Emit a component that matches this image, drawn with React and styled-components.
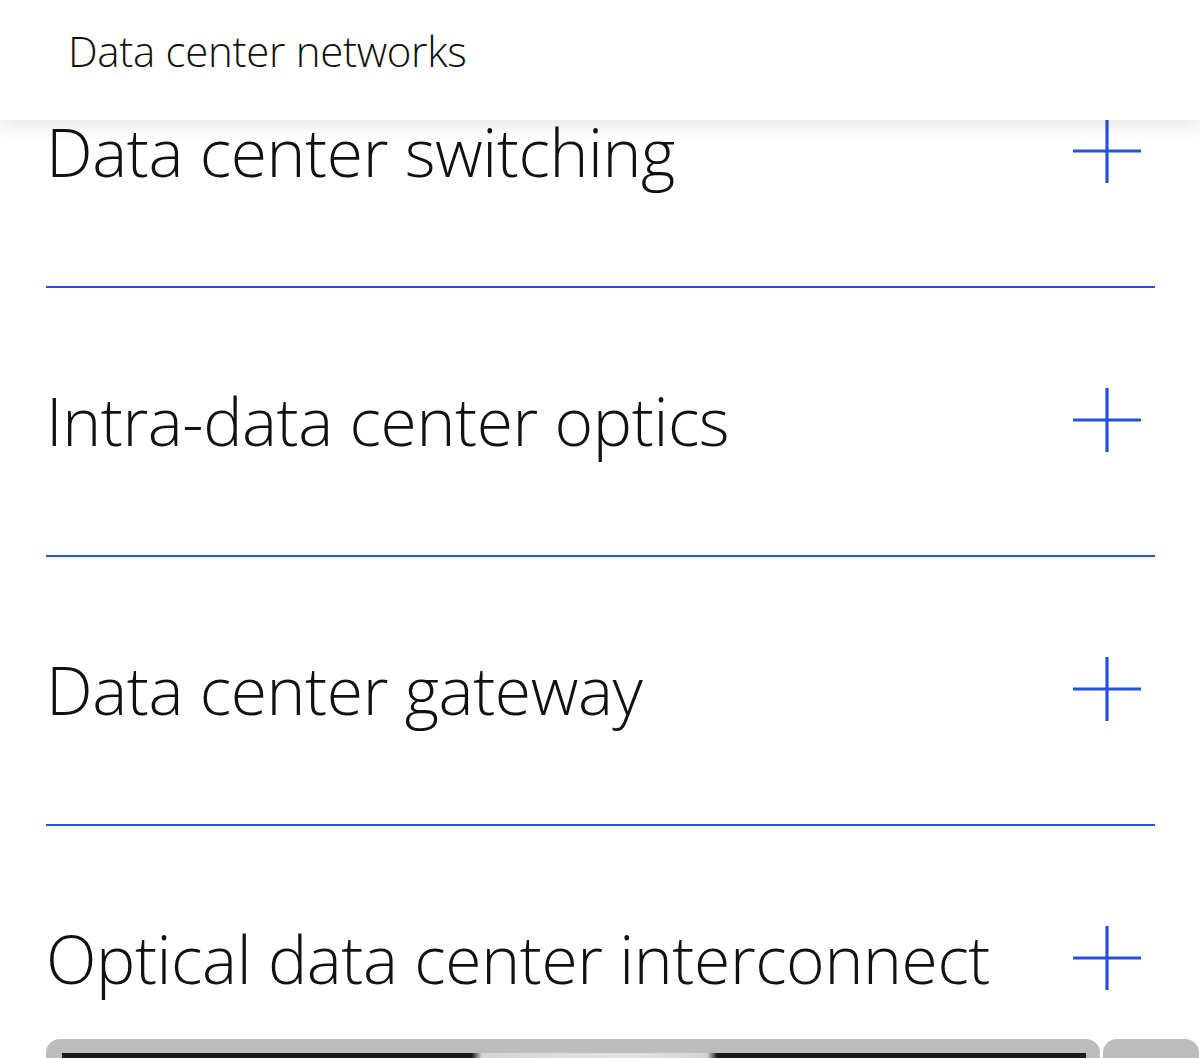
import React from 'react';
import styled, { createGlobalStyle } from 'styled-components';

const GlobalStyle = createGlobalStyle`
  html, body {
    margin: 0;
    padding: 0;
    background: #ffffff;
    overflow: hidden;
  }
  body {
    font-family: "Open Sans", "Noto Sans", sans-serif;
    color: #111111;
  }
`;

const items = [
  'Data center switching',
  'Intra-data center optics',
  'Data center gateway',
  'Optical data center interconnect',
];

function PlusIcon() {
  return (
    <svg width="68" height="64" viewBox="0 0 68 64" aria-hidden="true">
      <path d="M0 32 H68 M34 0 V64" stroke="#2452e0" strokeWidth="3.2" fill="none" />
    </svg>
  );
}

function App() {
  return (
    <Page>
      <GlobalStyle />
      <Header>
        <HeaderTitle>Data center networks</HeaderTitle>
      </Header>
      <List>
        {items.map((label, i) => (
          <Row key={label} $first={i === 0} $last={i === items.length - 1}>
            <RowLabel>{label}</RowLabel>
            <PlusIcon />
          </Row>
        ))}
      </List>
      <CardStrip>
        <Card>
          <CardImage />
        </Card>
        <Card $peek />
      </CardStrip>
    </Page>
  );
}

const Page = styled.div`
  width: 1200px;
  height: 1058px;
  overflow: hidden;
  display: flex;
  flex-direction: column;
`;

const Header = styled.header`
  position: relative;
  z-index: 2;
  height: 120px;
  flex-shrink: 0;
  background: #ffffff;
  box-shadow: 0 4px 18px rgba(0, 0, 0, 0.12);
  display: flex;
  align-items: flex-start;
  padding: 23px 0 0 68px;
  box-sizing: border-box;
`;

const HeaderTitle = styled.h2`
  margin: 0;
  font-size: 42px;
  font-weight: 300;
  line-height: 56px;
  letter-spacing: -0.3px;
  color: #111;
`;

const List = styled.div`
  display: flex;
  flex-direction: column;
  padding: 0 45px 0 46px;
`;

const Row = styled.div`
  display: flex;
  align-items: center;
  justify-content: space-between;
  padding: ${p => (p.$first ? '0' : '97px')} 14px ${p => (p.$last ? '46px' : '100px')} 0;
  margin-top: ${p => (p.$first ? '-4px' : '0')};
  border-bottom: ${p => (p.$last ? 'none' : '2px solid #2452e0')};

  svg {
    flex-shrink: 0;
  }
`;

const RowLabel = styled.span`
  font-size: 66px;
  font-weight: 300;
  line-height: 70px;
  letter-spacing: -0.4px;
  color: #111;
`;

const CardStrip = styled.div`
  display: flex;
  gap: 3px;
  padding-left: 46px;
`;

const Card = styled.div`
  flex-shrink: 0;
  width: ${p => (p.$peek ? '96px' : '1054px')};
  height: 40px;
  background: #bdbdbd;
  border-radius: 14px 14px 0 0;
  padding: 14px 14px 0 16px;
  box-sizing: border-box;
`;

const CardImage = styled.div`
  height: 100%;
  background: linear-gradient(
    90deg,
    #1c1c1c 0%,
    #1c1c1c 40%,
    #cfd8d4 41%,
    #dfe6e2 55%,
    #cfd8d4 63%,
    #1c1c1c 64%,
    #1c1c1c 100%
  );
`;

export default App;
